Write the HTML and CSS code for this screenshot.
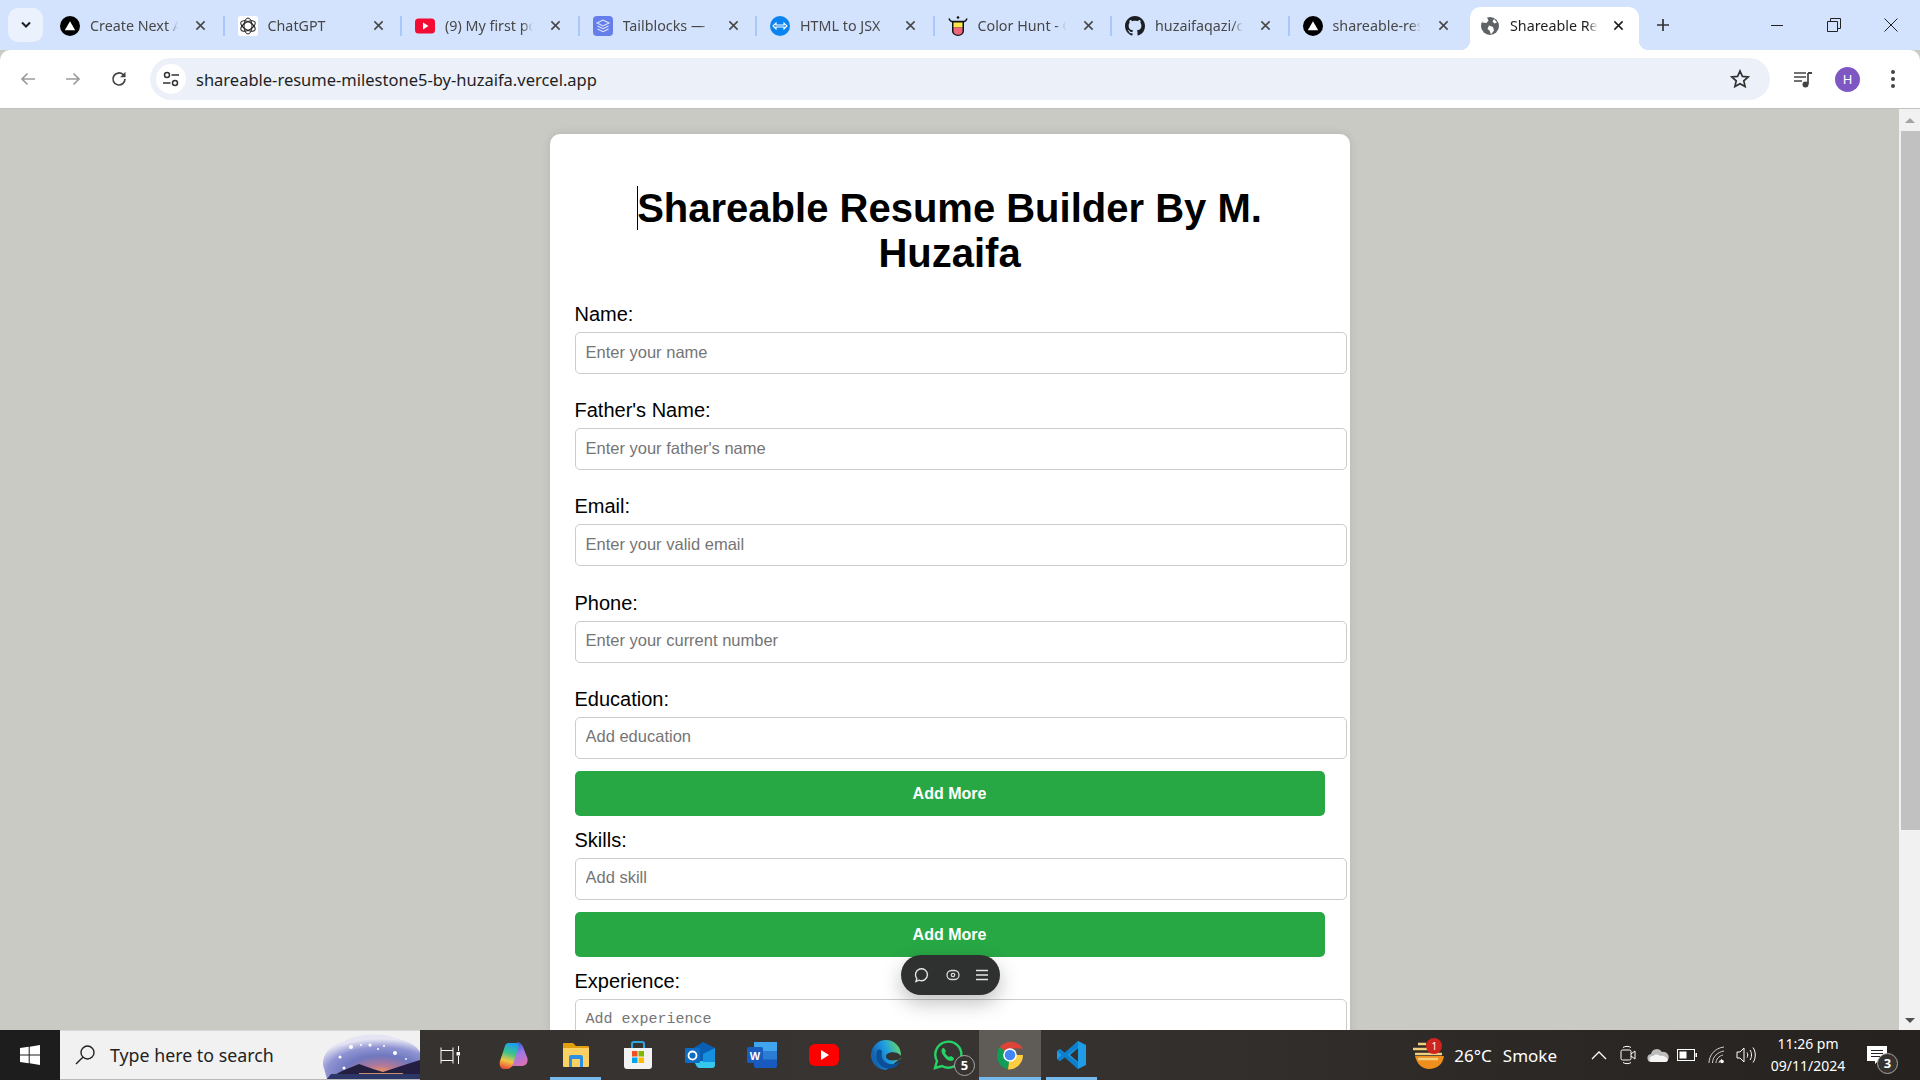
FILE: index.html
```html
<!DOCTYPE html>
<html lang="en">
<head>
    <meta charset="UTF-8">
    <title>Shareable Resume Builder</title>
    <link rel="stylesheet" href="styles.css">
</head>
<body>
    <svg class="defs" width="0" height="0">
        <symbol id="ico-vercel" viewBox="0 0 20 20"><circle cx="10" cy="10" r="10" fill="#000"/><path d="M10 5.2l5.2 9H4.8z" fill="#fff"/></symbol>
        <symbol id="ico-close" viewBox="0 0 12 12"><path d="M1.5 1.5l9 9M10.500 1.500l-9 9" stroke="currentColor" stroke-width="1.700" fill="none"/></symbol>
    </svg>

    <div class="tabstrip">
        <div class="tab-menu"><svg width="12" height="8" viewBox="0 0 12 8"><path d="M2 1.500l4 4 4-4" stroke="#1f1f1f" stroke-width="2" fill="none"/></svg></div>
        <div class="tab">
            <svg class="favicon" viewBox="0 0 20 20"><use href="#ico-vercel"/></svg>
            <span class="tab-title">Create Next App</span>
            <svg class="tab-x" viewBox="0 0 12 12"><use href="#ico-close"/></svg>
        </div>
        <div class="tab">
            <svg class="favicon" viewBox="0 0 20 20"><rect width="20" height="20" rx="3" fill="#fff"/><g fill="none" stroke="#222" stroke-width="1"><ellipse cx="10" cy="10" rx="4" ry="8"/><ellipse cx="10" cy="10" rx="4" ry="8" transform="rotate(60 10 10)"/><ellipse cx="10" cy="10" rx="4" ry="8" transform="rotate(120 10 10)"/></g></svg>
            <span class="tab-title">ChatGPT</span>
            <svg class="tab-x" viewBox="0 0 12 12"><use href="#ico-close"/></svg>
        </div>
        <div class="tab">
            <svg class="favicon" viewBox="0 0 20 20"><rect y="2.500" width="20" height="15" rx="3.500" fill="#f40b33"/><path d="M8 6.500l5.500 3.500L8 13.500z" fill="#fff"/></svg>
            <span class="tab-title">(9) My first post</span>
            <svg class="tab-x" viewBox="0 0 12 12"><use href="#ico-close"/></svg>
        </div>
        <div class="tab">
            <svg class="favicon" viewBox="0 0 20 20"><rect width="20" height="20" rx="4" fill="#667eea"/><path d="M10 4l6 3-6 3-6-3zM4.500 10l5.500 2.700 5.500-2.700M4.500 13l5.500 2.700 5.500-2.700" fill="none" stroke="#dfe5fb" stroke-width="1.100"/></svg>
            <span class="tab-title">Tailblocks — Ready</span>
            <svg class="tab-x" viewBox="0 0 12 12"><use href="#ico-close"/></svg>
        </div>
        <div class="tab">
            <svg class="favicon" viewBox="0 0 20 20"><circle cx="10" cy="10" r="10" fill="#0a84f0"/><path d="M3 10l3-3v2h8V7l3 3-3 3v-2H6v2z" fill="none" stroke="#fff" stroke-width="1.100"/></svg>
            <span class="tab-title">HTML to JSX</span>
            <svg class="tab-x" viewBox="0 0 12 12"><use href="#ico-close"/></svg>
        </div>
        <div class="tab">
            <svg class="favicon" viewBox="0 0 20 20"><circle cx="10" cy="1.500" r="1.300" fill="#111"/><path d="M1 2.500C2 5 3 5.500 4 5.500h12c1 0 2-.5 3-3" fill="none" stroke="#111" stroke-width="1.500"/><path d="M4 5h12v10a6 5 0 0 1-12 0z" fill="#111"/><rect x="5.500" y="6.500" width="9" height="5" fill="#fbe74a"/><path d="M5.500 11.500h9V15a4.500 3.700 0 0 1-9 0z" fill="#f0677a"/></svg>
            <span class="tab-title">Color Hunt - Color</span>
            <svg class="tab-x" viewBox="0 0 12 12"><use href="#ico-close"/></svg>
        </div>
        <div class="tab">
            <svg class="favicon" viewBox="0 0 16 16"><path fill="#1b1f23" d="M8 0C3.580 0 0 3.580 0 8c0 3.540 2.290 6.530 5.470 7.590.4.070.55-.17.55-.38 0-.19-.01-.82-.01-1.490-2.010.37-2.530-.49-2.690-.94-.09-.23-.48-.94-.82-1.130-.28-.15-.68-.52-.01-.53.63-.01 1.080.58 1.230.82.72 1.210 1.870.87 2.330.66.070-.52.28-.87.51-1.070-1.780-.2-3.640-.89-3.640-3.950 0-.87.31-1.590.82-2.150-.08-.2-.36-1.020.08-2.120 0 0 .67-.21 2.200.82.64-.18 1.320-.27 2-.27.68 0 1.360.09 2 .27 1.530-1.040 2.200-.82 2.200-.82.44 1.100.16 1.920.08 2.120.51.56.82 1.270.82 2.150 0 3.070-1.870 3.750-3.650 3.950.29.25.54.73.54 1.480 0 1.070-.01 1.930-.01 2.200 0 .21.15.46.55.38A8.013 8.013 0 0 0 16 8c0-4.420-3.580-8-8-8z"/></svg>
            <span class="tab-title">huzaifaqazi/code</span>
            <svg class="tab-x" viewBox="0 0 12 12"><use href="#ico-close"/></svg>
        </div>
        <div class="tab tab-last">
            <svg class="favicon" viewBox="0 0 20 20"><use href="#ico-vercel"/></svg>
            <span class="tab-title">shareable-resume</span>
            <svg class="tab-x" viewBox="0 0 12 12"><use href="#ico-close"/></svg>
        </div>
        <div class="tab tab-active">
            <svg class="favicon" viewBox="0 0 20 20"><circle cx="10" cy="10" r="9" fill="#5f6368"/><path d="M7 1.500l1.500 3-2 2.500-4.500-.5C3 3.500 5 2 7 1.500zM9 9.500l4 1.500 1 3.500-3 4-1.500-4-2-1.500zM14 3l3 3.500-2.500 1-2-2z" fill="#fff"/></svg>
            <span class="tab-title">Shareable Resume</span>
            <svg class="tab-x" viewBox="0 0 12 12"><use href="#ico-close"/></svg>
        </div>
        <div class="tab-new"><svg width="14" height="14" viewBox="0 0 14 14"><path d="M7 1v12M1 7h12" stroke="#333" stroke-width="1.700"/></svg></div>
        <div class="win-controls">
            <span class="win-btn"><svg width="14" height="14" viewBox="0 0 14 14"><path d="M1 7.500h12" stroke="#222"/></svg></span>
            <span class="win-btn"><svg width="14" height="14" viewBox="0 0 14 14"><path d="M.5 3.500h10v10H.5zM3.500 3.500v-3h10v10h-3" fill="none" stroke="#222"/></svg></span>
            <span class="win-btn"><svg width="14" height="14" viewBox="0 0 14 14"><path d="M.5.500l13 13M13.500.500l-13 13" stroke="#222"/></svg></span>
        </div>
    </div>

    <div class="toolbar">
        <div class="nav-btn"><svg width="18" height="18" viewBox="0 0 18 18"><path d="M16 9H3M8.500 3.500L3 9l5.500 5.500" fill="none" stroke="#9a9c9f" stroke-width="1.700"/></svg></div>
        <div class="nav-btn"><svg width="18" height="18" viewBox="0 0 18 18"><path d="M2 9h13M9.500 3.500L15 9l-5.500 5.500" fill="none" stroke="#9a9c9f" stroke-width="1.700"/></svg></div>
        <div class="nav-btn"><svg width="18" height="18" viewBox="0 0 18 18"><path d="M15 9a6 6 0 1 1-1.800-4.300L15 6.500" fill="none" stroke="#444" stroke-width="1.700"/><path d="M15.500 1.800v5.400h-5.400z" fill="#444"/></svg></div>
        <div class="omnibox">
            <span class="site-btn"><svg width="18" height="18" viewBox="0 0 18 18" fill="none" stroke="#333" stroke-width="1.500"><circle cx="5" cy="5" r="2.500"/><path d="M9.500 5H17M1 13h7.500"/><circle cx="13" cy="13" r="2.500"/></svg></span>
            <span class="url">shareable-resume-milestone5-by-huzaifa.vercel.app</span>
            <svg class="star" width="20" height="20" viewBox="0 0 20 20"><path d="M10 2l2.400 5.400 5.800.6-4.400 3.900 1.300 5.700L10 14.700l-5.100 2.900 1.300-5.700L1.800 8l5.800-.6z" fill="none" stroke="#333" stroke-width="1.700"/></svg>
        </div>
        <div class="tool-btn"><svg width="20" height="20" viewBox="0 0 20 20"><path d="M1 4h12M1 8h12M1 12h8" stroke="#444" stroke-width="1.700"/><path d="M15 4v11" stroke="#444" stroke-width="1.700"/><path d="M15 3h4v2h-4z" fill="#444"/><circle cx="12.500" cy="15.500" r="3" fill="#444"/></svg></div>
        <div class="avatar">H</div>
        <div class="tool-btn"><svg width="4" height="18" viewBox="0 0 4 18"><circle cx="2" cy="2" r="2" fill="#444"/><circle cx="2" cy="9" r="2" fill="#444"/><circle cx="2" cy="16" r="2" fill="#444"/></svg></div>
    </div>

    <div class="viewport">
        <div class="page">
            <div class="card">
                <h1 class="title"><span class="caret"></span>Shareable Resume Builder By M. Huzaifa</h1>
                <form>
                    <div class="field">
                        <label class="field-label">Name:</label>
                        <input class="field-input" type="text" placeholder="Enter your name">
                    </div>
                    <div class="field">
                        <label class="field-label">Father's Name:</label>
                        <input class="field-input" type="text" placeholder="Enter your father's name">
                    </div>
                    <div class="field">
                        <label class="field-label">Email:</label>
                        <input class="field-input" type="text" placeholder="Enter your valid email">
                    </div>
                    <div class="field">
                        <label class="field-label">Phone:</label>
                        <input class="field-input" type="text" placeholder="Enter your current number">
                    </div>
                    <div class="field field-more">
                        <label class="field-label">Education:</label>
                        <input class="field-input" type="text" placeholder="Add education">
                        <button class="add-btn" type="button">Add More</button>
                    </div>
                    <div class="field field-more">
                        <label class="field-label">Skills:</label>
                        <input class="field-input" type="text" placeholder="Add skill">
                        <button class="add-btn" type="button">Add More</button>
                    </div>
                    <div class="field">
                        <label class="field-label">Experience:</label>
                        <textarea class="field-input field-area" placeholder="Add experience"></textarea>
                    </div>
                </form>
            </div>
        </div>
        <div class="scrollbar">
            <span class="arrow-up"></span>
            <span class="thumb"></span>
            <span class="arrow-down"></span>
        </div>
        <div class="vercel-pill">
            <svg width="18" height="18" viewBox="0 0 18 18"><path d="M4 15.500l.8-3A6 6 0 1 1 7 14.200z" fill="none" stroke="#e4e4e4" stroke-width="1.400"/></svg>
            <svg width="14" height="14" viewBox="0 0 14 14" fill="none" stroke="#d8d8d8" stroke-width="1.300"><rect x="1" y="2.500" width="12" height="9" rx="4.500"/><circle cx="7" cy="7" r="1.700"/></svg>
            <svg width="14" height="14" viewBox="0 0 14 14"><path d="M1 2.500h12M1 7h12M1 11.500h12" stroke="#e4e4e4" stroke-width="1.500"/></svg>
        </div>
    </div>

    <div class="taskbar">
        <div class="start"><svg width="20" height="20" viewBox="0 0 20 20" fill="#fff"><path d="M0 3l8.700-1.200v7.700H0zM9.700 1.700L20 0v9.500H9.700zM0 10.500h8.700v7.700L0 17zM9.700 10.500H20V20L9.700 18.300z"/></svg></div>
        <div class="search">
            <svg width="22" height="22" viewBox="0 0 22 22" fill="none" stroke="#222" stroke-width="1.400"><circle cx="13.500" cy="8.500" r="6.500"/><path d="M8.800 13.200L2 20"/></svg>
            <span class="search-text">Type here to search</span>
            <svg class="search-art" width="97" height="48" viewBox="0 0 97 48">
                <defs>
                    <radialGradient id="sky" cx="60%" cy="85%" r="75%"><stop offset="0" stop-color="#f0965c"/><stop offset=".22" stop-color="#b0789a"/><stop offset=".5" stop-color="#6f78c0"/><stop offset=".75" stop-color="#8f93d2"/><stop offset="1" stop-color="#e4e4f2"/></radialGradient>
                </defs>
                <path d="M0 34C0 20 10 13 20 11 30 3 60 1 72 7c12 2 22 8 25 14v27H4z" fill="url(#sky)"/>
                <path d="M2 49l17-9 17-7 14 5 10 3 15-5 22-7v21z" fill="#241e40"/>
                <path d="M8 43h89v6H3z" fill="#2c3768"/>
                <path d="M36 42h44v1H36z" fill="#c98f6b"/>
                <g fill="#fff"><circle cx="28" cy="16" r="2"/><circle cx="38" cy="14" r="1"/><circle cx="47" cy="14" r="1.500"/><circle cx="61" cy="15" r="1"/><circle cx="72" cy="22" r="2"/><circle cx="17" cy="26" r="1.500"/><circle cx="21" cy="37" r="1.500"/><circle cx="83" cy="28" r="1"/><circle cx="55" cy="18" r="1"/></g>
            </svg>
        </div>
        <div class="task-view"><svg width="20" height="20" viewBox="0 0 20 20" fill="none" stroke="#fff" stroke-width="1"><path d="M1 2.500v3h12v-3M1 15.500v3M13 15.500v3M1 15.500h12M1 5.500v10M13 5.500v10M18.500 1v5M18.500 11v8"/><rect x="17" y="7.500" width="3" height="2.500" fill="#fff"/></svg></div>
        <div class="task-item"><svg width="30" height="28" viewBox="0 0 30 28">
            <defs><linearGradient id="cop" x1="0.600" y1="0" x2="0.400" y2="1"><stop offset="0" stop-color="#1a9ff0"/><stop offset=".4" stop-color="#3fc488"/><stop offset=".7" stop-color="#f4c542"/><stop offset="1" stop-color="#e8503a"/></linearGradient><linearGradient id="cop2" x1="0.300" y1="0" x2="0.700" y2="1"><stop offset="0" stop-color="#1a55c8"/><stop offset=".45" stop-color="#9a7ae8"/><stop offset="1" stop-color="#ee6ea5"/></linearGradient></defs>
            <path d="M18 1c3 0 5 2 6 5l4 10c2 5-1 9-5 9h-8c-3 0-5 2-6 3 2-1 3-3 4-6l4-13c1-4 1-7 1-8z" fill="url(#cop2)"/>
            <path d="M9 2h8c3 0 3 3 2 6l-5 15c-1 3-3 5-6 5H6C1 28 0 24 1 20L5 8c1-4 2-6 4-6z" fill="url(#cop)"/>
        </svg></div>
        <div class="task-item task-open"><svg width="28" height="26" viewBox="0 0 28 26"><path d="M1 2a1 1 0 0 1 1-1h9l3 3h12a1 1 0 0 1 1 1v4H1z" fill="#e0a010"/><path d="M1 6h26v18a1 1 0 0 1-1 1H2a1 1 0 0 1-1-1z" fill="#fbd163"/><path d="M7 21v-6a2 2 0 0 1 2-2h10a2 2 0 0 1 2 2v10h-3v-8H10v8H7z" fill="#2e8fe0"/></svg></div>
        <div class="task-item"><svg width="30" height="30" viewBox="0 0 30 30"><path d="M9 9V4a2 2 0 0 1 2-2h8a2 2 0 0 1 2 2v5" fill="none" stroke="#2ea7e0" stroke-width="2"/><path d="M1 8h28v18a3 3 0 0 1-3 3H4a3 3 0 0 1-3-3z" fill="#f2f2f2"/><rect x="9" y="11" width="5.500" height="5.500" fill="#f25022"/><rect x="15.500" y="11" width="5.500" height="5.500" fill="#7fba00"/><rect x="9" y="17.500" width="5.500" height="5.500" fill="#00a4ef"/><rect x="15.500" y="17.500" width="5.500" height="5.500" fill="#ffb900"/></svg></div>
        <div class="task-item"><svg width="30" height="28" viewBox="0 0 30 28"><path d="M7 8L18 1l12 6v13a3 3 0 0 1-3 3H10z" fill="#0a5fb4"/><path d="M12 26l-3-6h21v4a3 3 0 0 1-3 3H14z" fill="#35c8ec"/><path d="M18 13l12-6v14H18z" fill="#1490df"/><rect y="7" width="15" height="15" rx="1" fill="#0f6cc4"/><circle cx="7.500" cy="14.500" r="4" fill="none" stroke="#fff" stroke-width="1.800"/></svg></div>
        <div class="task-item"><svg width="30" height="28" viewBox="0 0 30 28"><path d="M7 3a2 2 0 0 1 2-2h19a2 2 0 0 1 2 2v22a2 2 0 0 1-2 2H9a2 2 0 0 1-2-2z" fill="#185abd"/><rect x="7" y="1" width="23" height="9" fill="#41a5ee"/><rect x="7" y="10" width="23" height="8.500" fill="#2b7cd3"/><rect y="6" width="16" height="16" rx="1.500" fill="#1a5cbe"/><text x="8" y="18.500" class="word-w">W</text></svg></div>
        <div class="task-item"><svg width="30" height="22" viewBox="0 0 30 22"><rect width="30" height="22" rx="6" fill="#f00"/><path d="M12 6l8 5-8 5z" fill="#fff"/></svg></div>
        <div class="task-item"><svg width="30" height="30" viewBox="0 0 30 30"><defs><linearGradient id="edge" x1="0" y1="0.700" x2="1" y2="0.300"><stop offset=".15" stop-color="#1466b4"/><stop offset=".55" stop-color="#1c9de4"/><stop offset="1" stop-color="#62d56e"/></linearGradient></defs><circle cx="15" cy="15" r="15" fill="url(#edge)"/><path d="M31 17c-3-5-11-6-15-3-2 2-1 5 2 6 4 1 8 0 12-1v12H14z" fill="#353230"/><path d="M6 11C3 21 11 30 20 28.500c4-.5 8-3.500 9.500-8-3 3.500-9 5-13.500 2.500-5-2.500-6-7-5-11.500C10 9 7 9 6 11z" fill="#0d4f96"/></svg></div>
        <div class="task-item whatsapp">
            <svg width="30" height="30" viewBox="0 0 30 30"><path d="M2 28l2-7A13 13 0 1 1 9 26z" fill="none" stroke="#25d366" stroke-width="2.400"/><path d="M10 8c-2 1-2 4 0 7 2 3 5 6 8 6 2 0 3-1 3-3l-3-2-2 1c-2-1-3-3-4-4l1-2-2-3z" fill="#25d366"/></svg>
            <span class="task-badge">5</span>
        </div>
        <div class="task-item task-open task-active"><svg width="30" height="30" viewBox="0 0 30 30"><path d="M15 15L4.600 7A14.500 14.500 0 0 1 28 8.500H15z" fill="#db4437"/><path d="M15 15L4.600 7A14.500 14.500 0 0 0 13 29.500z" fill="#0f9d58"/><path d="M15 15h13a14.500 14.500 0 0 1-15 14.500z" fill="#ffcd40"/><circle cx="15" cy="15" r="6.800" fill="#fff"/><circle cx="15" cy="15" r="5.300" fill="#4285f4"/></svg></div>
        <div class="task-item task-open"><svg width="30" height="30" viewBox="0 0 30 30"><path d="M21 1l8 4v20l-8 4L8 17l-5 4-3-2V11l3-2 5 4z" fill="#1e9de6"/><path d="M21 8l-8 7 8 7z" fill="#353230"/><path d="M21 1v6L8 17l-5 4-3-2zM0 11l3-2 18 14v6z" fill="#0b78c4" opacity=".8"/></svg></div>
        <div class="tray">
            <div class="weather">
                <svg width="32" height="30" viewBox="0 0 32 30"><path d="M3 16h29c-1 8-7 13-15 13-7 0-12-5-14-13z" fill="#ee8e1d"/><path d="M6 4h8M1 9h16M3 14h27M6 19h20" stroke="#f2cf7c" stroke-width="2.500"/></svg>
                <span class="weather-badge">1</span>
            </div>
            <span class="tray-text tray-temp">26°C</span>
            <span class="tray-text tray-cond">Smoke</span>
            <span class="tray-ico tray-chev"><svg width="16" height="10" viewBox="0 0 16 10"><path d="M1 9l7-7 7 7" fill="none" stroke="#fff" stroke-width="1.300"/></svg></span>
            <span class="tray-ico"><svg width="16" height="20" viewBox="0 0 16 20" fill="none" stroke="#fff" stroke-width="1"><path d="M3 2.500C5 1 9 1 11 2.500M3 17.500c2 1.500 6 1.500 8 0"/><rect x="1" y="5" width="10" height="10" rx="1.500"/><path d="M11 9l4-3v8l-4-3"/></svg></span>
            <span class="tray-ico"><svg width="22" height="14" viewBox="0 0 22 14"><path d="M5 14a4 4 0 0 1-1-8 6 6 0 0 1 11-2 5 5 0 0 1 3 10z" fill="#bcbcbc"/><path d="M5 14a3 3 0 0 1 1-6c2-2 5-2 7 0 3-1 7 1 8 4-1 2-2 2-3 2z" fill="#f4f4f4"/></svg></span>
            <span class="tray-ico"><svg width="20" height="12" viewBox="0 0 20 12"><rect x=".5" y=".5" width="17" height="11" fill="none" stroke="#fff"/><rect x="2.500" y="2.500" width="7" height="7" fill="#fff"/><rect x="18.500" y="4" width="1.500" height="4" fill="#fff"/></svg></span>
            <span class="tray-ico"><svg width="18" height="18" viewBox="0 0 18 18" fill="none" stroke="#cfcfcf" stroke-width="1"><path d="M1 17C1 9 7 2 16 1M4.500 17c0-6 5-11 11.500-12M8 17c0-4 3-7 7-8M11 17c0-1 1-3 3-4"/><circle cx="14" cy="15.500" r="1.800" fill="#fff" stroke="none"/></svg></span>
            <span class="tray-ico"><svg width="20" height="18" viewBox="0 0 20 18" fill="none" stroke="#fff" stroke-width="1"><path d="M1 6h3l4-4v14l-4-4H1zM11 6.500c1 1.500 1 3.500 0 5M14 4c2 3 2 7 0 10M17 1.500c3 4 3 11 0 15"/></svg></span>
            <div class="clock"><span>11:26 pm</span><span>09/11/2024</span></div>
            <div class="notify">
                <svg width="20" height="18" viewBox="0 0 20 18"><path d="M0 0h20v15h-9l-3 3v-3H0z" fill="#fff"/><path d="M4 4.500h12M4 7.500h12M4 10.500h9" stroke="#222"/></svg>
                <span class="notify-badge">3</span>
            </div>
        </div>
    </div>
</body>
</html>
```

FILE: styles.css
```css
* {
    box-sizing: content-box;
}

html, body {
    margin: 0;
    height: 100%;
    overflow: hidden;
}

body {
    display: flex;
    flex-direction: column;
    width: 1920px;
    height: 1080px;
    font-family: "Noto Sans", sans-serif;
    background-color: #c9cac4;
}

.defs {
    display: none;
}

/* browser tabs */
.tabstrip {
    display: flex;
    align-items: flex-end;
    flex: 0 0 50px;
    background-color: #d3e3fd;
}

.tab-menu {
    display: flex;
    align-items: center;
    justify-content: center;
    width: 35px;
    height: 34px;
    margin: 0 4px 8px 8px;
    border-radius: 10px;
    background-color: #ebf1fd;
}

.tab {
    position: relative;
    display: flex;
    align-items: center;
    flex: 0 0 177.500px;
    height: 43px;
    color: #474747;
}

.tab::after {
    content: "";
    position: absolute;
    right: 0;
    top: 9px;
    width: 2px;
    height: 20px;
    background-color: #a8c7fa;
}

.tab-last::after,
.tab-active::after {
    display: none;
}

.favicon {
    flex: none;
    width: 20px;
    height: 20px;
    margin: -6px 0 0 13px;
}

.tab-title {
    width: 88px;
    margin: -7px 2px 0 10px;
    overflow: hidden;
    white-space: nowrap;
    font-size: 14.300px;
    -webkit-mask-image: linear-gradient(to right, #000 88%, transparent 100%);
    mask-image: linear-gradient(to right, #000 88%, transparent 100%);
}

.tab-x {
    flex: none;
    width: 11px;
    height: 11px;
    margin: -6px 0 0 15px;
    color: #474747;
}

.tab-active {
    flex: 0 0 169px;
    margin-left: 3px;
    border-radius: 10px 10px 0 0;
    background-color: #fff;
    color: #1f1f1f;
}

.tab-active .favicon {
    margin-left: 10px;
}

.tab-active .tab-x {
    color: #1f1f1f;
    margin-left: 13px;
}

.tab-active::before {
    content: "";
    position: absolute;
    left: -10px;
    right: -10px;
    bottom: 0;
    height: 10px;
    background:
        radial-gradient(circle at 0 0, #d3e3fd 10px, #fff 10.500px) left bottom / 10px 10px no-repeat,
        radial-gradient(circle at 100% 0, #d3e3fd 10px, #fff 10.500px) right bottom / 10px 10px no-repeat;
}

.tab-new {
    display: flex;
    justify-content: center;
    width: 34px;
    margin: 0 0 18px 7px;
}

.win-controls {
    display: flex;
    margin: 0 0 0 auto;
    padding-right: 1px;
    height: 50px;
    align-items: center;
}

.win-btn {
    display: flex;
    justify-content: center;
    width: 57px;
    margin-bottom: 1px;
}

/* address bar */
.toolbar {
    display: flex;
    align-items: center;
    flex: 0 0 58px;
    padding-left: 5px;
    background-color: #fff;
    border-bottom: 1px solid #c2c3c0;
    border-radius: 10px 10px 0 0;
}

.nav-btn {
    display: flex;
    justify-content: center;
    width: 45.500px;
}

.omnibox {
    display: flex;
    align-items: center;
    width: 1620px;
    height: 42px;
    margin: 0 10px 0 8.500px;
    border-radius: 21px;
    background-color: #ebf0f9;
}

.site-btn {
    display: flex;
    align-items: center;
    justify-content: center;
    width: 30px;
    height: 30px;
    margin-left: 6px;
    border-radius: 50%;
    background-color: #fff;
}

.url {
    margin: 1px 0 0 10px;
    font-size: 16.500px;
    color: #1f1f1f;
}

.star {
    margin: 0 20px 0 auto;
}

.tool-btn {
    display: flex;
    justify-content: center;
    width: 45px;
}

.avatar {
    width: 25px;
    height: 25px;
    margin: 0 10px;
    border-radius: 50%;
    background-color: #7e57c2;
    color: #fff;
    font-size: 13px;
    line-height: 25px;
    text-align: center;
}

/* page under the browser chrome */
.viewport {
    position: relative;
    display: flex;
    flex: 1;
    min-height: 0;
    overflow: hidden;
    font-family: "Liberation Sans", Arial, sans-serif;
}

.page {
    flex: 1;
    padding-top: 25px;
    overflow: hidden;
}

.card {
    width: 750px;
    margin: 0 auto;
    padding: 25px;
    border-radius: 10px;
    background-color: #fff;
    box-shadow: 0 0 10px rgba(0, 0, 0, 0.1);
}

.title {
    position: relative;
    margin: 27px 0 27px;
    font-size: 40px;
    font-weight: bold;
    text-align: center;
    color: #000;
}

.caret {
    position: absolute;
    width: 1px;
    height: 44px;
    background-color: #000;
}

.field {
    margin-bottom: 25.200px;
}

.field-more {
    margin-bottom: 12.400px;
}

.field-label {
    display: block;
    margin-bottom: 6px;
    font-size: 20px;
    line-height: 23px;
    color: #000;
}

.field-input {
    display: block;
    width: 750px;
    height: 20px;
    padding: 9px 10px 11px;
    border: 1px solid #ccc;
    border-radius: 5px;
    font-family: "Liberation Sans", Arial, sans-serif;
    font-size: 16.500px;
    background-color: #fff;
}

.field-input::placeholder {
    color: #757575;
}

.field-area {
    height: 60px;
    padding-top: 11px;
    resize: none;
    font-family: "Liberation Mono", monospace;
    font-size: 15px;
}

.add-btn {
    display: block;
    width: 750px;
    height: 45px;
    margin-top: 12.500px;
    padding: 0;
    border: none;
    border-radius: 5px;
    background-color: #28a745;
    color: #fff;
    font-family: "Liberation Sans", Arial, sans-serif;
    font-size: 16px;
    font-weight: bold;
}

.scrollbar {
    position: relative;
    flex: 0 0 21px;
    background-color: #f1f1f1;
}

.thumb {
    position: absolute;
    left: 2px;
    right: 0;
    top: 22px;
    height: 699px;
    background-color: #c1c1c1;
}

.arrow-up,
.arrow-down {
    position: absolute;
    left: 6px;
    width: 0;
    height: 0;
    border-left: 5px solid transparent;
    border-right: 5px solid transparent;
}

.arrow-up {
    top: 9px;
    border-bottom: 5px solid #a3a3a3;
}

.arrow-down {
    bottom: 7px;
    border-top: 5px solid #505050;
}

.vercel-pill {
    position: absolute;
    left: 901px;
    top: 846px;
    display: flex;
    align-items: center;
    justify-content: space-between;
    box-sizing: border-box;
    width: 99px;
    height: 40px;
    padding: 0 11px;
    border-radius: 20px;
    background-color: #2f3130;
    box-shadow: 0 8px 20px rgba(0, 0, 0, 0.25);
}

/* windows taskbar */
.taskbar {
    display: flex;
    align-items: center;
    flex: 0 0 50px;
    color: #fff;
    background: linear-gradient(to right, #33302e 0%, #373432 50%, #2a2624 85%, #262220 100%);
}

.start {
    display: flex;
    align-items: center;
    justify-content: center;
    width: 60px;
    height: 50px;
    background-color: #1d1d1d;
}

.search {
    display: flex;
    align-items: center;
    box-sizing: border-box;
    width: 360px;
    height: 50px;
    padding-left: 14px;
    border-top: 1px solid #d8d8d8;
    border-bottom: 1px solid #b9b9b9;
    background-color: #f1f1f1;
    overflow: hidden;
}

.search-text {
    margin-left: 14px;
    font-size: 17.800px;
    color: #222;
}

.search-art {
    margin-left: auto;
    align-self: flex-end;
}

.task-view {
    display: flex;
    justify-content: center;
    width: 60px;
    margin-right: 3px;
}

.task-item {
    position: relative;
    display: flex;
    align-items: center;
    justify-content: center;
    box-sizing: border-box;
    width: 62px;
    height: 50px;
}

.task-open::after {
    content: "";
    position: absolute;
    left: 5px;
    right: 6px;
    bottom: 0;
    height: 3px;
    background-color: #76b9ed;
}

.task-active {
    background-color: #5f5b57;
}

.task-active::after {
    left: 0;
    right: 0;
}

.word-w {
    font-family: "Liberation Sans", Arial, sans-serif;
    font-size: 11px;
    font-weight: bold;
    fill: #fff;
    text-anchor: middle;
}

.task-badge {
    position: absolute;
    right: 4px;
    bottom: 4px;
    width: 19px;
    height: 19px;
    border: 1px solid #a8a8a8;
    border-radius: 50%;
    background-color: #353230;
    font-size: 13px;
    font-weight: bold;
    line-height: 19px;
    text-align: center;
}

.tray {
    display: flex;
    align-items: center;
    margin-left: auto;
    height: 50px;
}

.weather {
    position: relative;
    display: flex;
    margin-right: 10px;
}

.weather-badge {
    position: absolute;
    right: 2px;
    top: -2px;
    width: 16px;
    height: 16px;
    border-radius: 50%;
    background-color: #d0251f;
    font-size: 10px;
    line-height: 16px;
    text-align: center;
}

.tray-text {
    font-size: 17px;
}

.tray-cond {
    margin-left: 11px;
}

.tray-ico {
    display: flex;
    justify-content: center;
    width: 29.500px;
}

.tray-chev {
    margin-left: 27px;
}

.clock {
    display: flex;
    flex-direction: column;
    align-items: center;
    width: 100px;
    margin-left: -3px;
    font-size: 14px;
    line-height: 22px;
}

.notify {
    position: relative;
    display: flex;
    margin: 0 33px 0 9px;
}

.notify-badge {
    position: absolute;
    right: -11px;
    bottom: -10px;
    width: 19px;
    height: 19px;
    border: 1px solid #a8a8a8;
    border-radius: 50%;
    background-color: #353230;
    font-size: 13px;
    font-weight: bold;
    line-height: 19px;
    text-align: center;
}
```
